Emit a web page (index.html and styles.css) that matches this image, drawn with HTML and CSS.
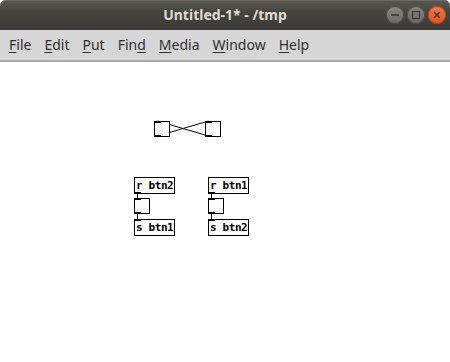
FILE: index.html
```html
<!DOCTYPE html>
<html lang="en">

<head>
    <meta charset="UTF-8">
    <title>Untitled-1* - /tmp</title>
    <link rel="stylesheet" href="styles.css">
</head>

<body>
    <div class="window">
        <div class="titlebar">
            <span class="title">Untitled-1* - /tmp</span>
            <div class="controls">
                <span class="ctl ctl-min">
                    <svg width="18" height="18" viewBox="0 0 18 18"><path d="M5 9h8" stroke="#3c3b37" stroke-width="1.6"/></svg>
                </span>
                <span class="ctl ctl-max">
                    <svg width="18" height="18" viewBox="0 0 18 18"><rect x="5.5" y="5.5" width="7" height="7" fill="none" stroke="#3c3b37" stroke-width="1.3"/></svg>
                </span>
                <span class="ctl ctl-close">
                    <svg width="18" height="18" viewBox="0 0 18 18"><path d="M6.2 6.2l5.6 5.6M11.8 6.2l-5.6 5.6" stroke="#3c3b37" stroke-width="1.5"/></svg>
                </span>
            </div>
        </div>

        <div class="menubar">
            <span class="menu-item"><u>F</u>ile</span>
            <span class="menu-item"><u>E</u>dit</span>
            <span class="menu-item"><u>P</u>ut</span>
            <span class="menu-item">Fin<u>d</u></span>
            <span class="menu-item"><u>M</u>edia</span>
            <span class="menu-item"><u>W</u>indow</span>
            <span class="menu-item"><u>H</u>elp</span>
        </div>

        <div class="canvas">
            <!-- patch cords, drawn under the boxes -->
            <svg class="cords" width="450" height="300">
                <line x1="157.5" y1="74" x2="208.5" y2="59" />
                <line x1="208.5" y1="74" x2="157.5" y2="59" />
                <line x1="137.5" y1="131" x2="137.5" y2="136" />
                <line x1="137.5" y1="151" x2="137.5" y2="157" />
                <line x1="211.5" y1="131" x2="211.5" y2="136" />
                <line x1="211.5" y1="151" x2="211.5" y2="157" />
            </svg>

            <div class="bng" style="left: 154px; top: 59px;"><i class="inlet"></i><i class="outlet"></i></div>
            <div class="bng" style="left: 205px; top: 59px;"><i class="inlet"></i><i class="outlet"></i></div>

            <div class="obj" style="left: 134px; top: 115px;">r btn2<i class="outlet"></i></div>
            <div class="bng" style="left: 134px; top: 136px;"><i class="inlet"></i><i class="outlet"></i></div>
            <div class="obj" style="left: 134px; top: 157px;"><i class="inlet"></i>s btn1</div>

            <div class="obj" style="left: 208px; top: 115px;">r btn1<i class="outlet"></i></div>
            <div class="bng" style="left: 208px; top: 136px;"><i class="inlet"></i><i class="outlet"></i></div>
            <div class="obj" style="left: 208px; top: 157px;"><i class="inlet"></i>s btn2</div>
        </div>
    </div>
</body>

</html>
```

FILE: styles.css
```css
/* window frame */
body {
    margin: 0;
    padding: 0;
    background-color: #fff;
    font-family: 'Noto Sans', sans-serif;
}

.window {
    width: 450px;
    height: 362px;
    display: flex;
    flex-direction: column;
    overflow: hidden;
}

.titlebar {
    height: 30px;
    flex-shrink: 0;
    display: flex;
    align-items: center;
    justify-content: center;
    position: relative;
    background: linear-gradient(#5a5953, #45443f 40%, #3c3b37);
    border-radius: 6px 6px 0 0;
    box-shadow: inset 0 1px 0 #6a6963;
}

.title {
    color: #dfdbd2;
    font-family: 'Noto Sans', sans-serif;
    font-weight: 700;
    font-size: 14px;
    margin-top: -1px;
}

.controls {
    position: absolute;
    right: 4px;
    top: 6px;
    display: flex;
    gap: 3px;
}

.ctl {
    width: 18px;
    height: 18px;
    border-radius: 50%;
    background: linear-gradient(#8a8983, #6a6964);
    box-shadow: inset 0 0 0 1px #4a4944;
}

.ctl svg {
    display: block;
}

.ctl-close {
    background: linear-gradient(#f27a4a, #e2521d);
    box-shadow: inset 0 0 0 1px #b4441a;
}

/* menu */
.menubar {
    height: 32px;
    flex-shrink: 0;
    box-sizing: border-box;
    display: flex;
    align-items: center;
    padding-left: 9px;
    padding-bottom: 2px;
    gap: 13px;
    background-color: #d6d6d6;
    border-bottom: 2px solid #a9a9a9;
}

.menu-item {
    font-size: 14px;
    color: #2f2f2f;
}

.menu-item u {
    text-decoration-thickness: 1px;
    text-underline-offset: 2px;
}

/* patch canvas */
.canvas {
    flex: 1;
    position: relative;
    background-color: #fff;
}

.cords {
    position: absolute;
    left: 0;
    top: 0;
}

.cords line {
    stroke: #000;
    stroke-width: 1;
}

.obj,
.bng {
    position: absolute;
    box-sizing: border-box;
    border: 1px solid #000;
}

.obj {
    width: 41px;
    height: 17px;
    padding-left: 1px;
    background-color: #fff;
    font-family: 'DejaVu Sans Mono', monospace;
    font-weight: 700;
    font-size: 11px;
    line-height: 15px;
    letter-spacing: -0.4px;
    color: #000;
    white-space: nowrap;
}

.bng {
    width: 16px;
    height: 16px;
    background-color: #fcfcfc;
}

.inlet,
.outlet {
    position: absolute;
    left: -1px;
    width: 7px;
    height: 2px;
    background-color: #000;
}

.inlet {
    top: -1px;
}

.outlet {
    bottom: -1px;
}
```
